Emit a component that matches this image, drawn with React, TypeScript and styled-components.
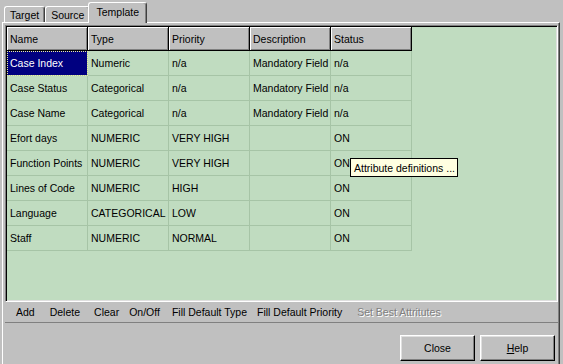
import React from 'react';
import styled, { createGlobalStyle, css } from 'styled-components';

const GlobalStyle = createGlobalStyle`
  html, body {
    margin: 0;
    padding: 0;
    background: #c0c0c0;
    overflow: hidden;
  }
`;

const FACE = '#c0c0c0';
const GRID_BG = '#c0dcc0';
const GRID_LINE = '#a6c4a6';

const Window = styled.div`
  width: 563px;
  height: 364px;
  background: ${FACE};
  display: flex;
  flex-direction: column;
  font-family: 'Liberation Sans', Arial, sans-serif;
  font-size: 10.5px;
  color: #000;
  overflow: hidden;
`;

const TabStrip = styled.div`
  display: flex;
  align-items: flex-end;
  height: 22px;
  padding-left: 4px;
  flex-shrink: 0;
`;

const Tab = styled.div<{ $active?: boolean }>`
  box-sizing: border-box;
  height: 16px;
  padding: 0 5px;
  display: flex;
  align-items: center;
  background: ${FACE};
  border-top: 1px solid #fff;
  border-left: 1px solid #fff;
  border-right: 1px solid #404040;
  border-radius: 3px 3px 0 0;
  box-shadow: inset -1px 0 #808080;
  white-space: nowrap;

  ${({ $active }) =>
    $active &&
    css`
      height: 21px;
      margin: 0 -2px -1px;
      padding: 0 7px 2px;
      position: relative;
      z-index: 1;
    `}
`;

const Panel = styled.div`
  flex: 1;
  width: 558px;
  box-sizing: border-box;
  margin-left: 2px;
  border-top: 1px solid #fff;
  border-left: 1px solid #fff;
  border-right: 1px solid #404040;
  box-shadow: inset -1px 0 #808080;
  padding: 2px 1px 0 2px;
  display: flex;
  flex-direction: column;
`;

const GridFrame = styled.div`
  position: relative;
  box-sizing: border-box;
  height: 277px;
  background: ${GRID_BG};
  border-top: 1px solid #808080;
  border-left: 1px solid #808080;
  border-right: 1px solid #fff;
  border-bottom: 1px solid #fff;
  box-shadow: inset 1px 1px #000, inset -1px -1px #dfdfdf;
  padding: 1px 0 0 1px;
`;

const Table = styled.div`
  display: grid;
  grid-template-columns: repeat(5, 81px);
  grid-auto-rows: 25px;
  grid-template-rows: 24px;
`;

const HeaderCell = styled.div`
  box-sizing: border-box;
  background: ${FACE};
  border-right: 1px solid #000;
  border-bottom: 1px solid #000;
  box-shadow: inset 1px 1px #fff, inset -1px -1px #808080;
  padding-left: 3px;
  display: flex;
  align-items: center;
  white-space: nowrap;
`;

const Cell = styled.div<{ $selected?: boolean }>`
  box-sizing: border-box;
  border-right: 1px solid ${GRID_LINE};
  border-bottom: 1px solid ${GRID_LINE};
  padding-left: 3px;
  display: flex;
  align-items: center;
  white-space: nowrap;
  overflow: hidden;

  ${({ $selected }) =>
    $selected &&
    css`
      background: #000080;
      color: #fff;
      outline: 1px dotted #f0f0a0;
      outline-offset: -1px;
    `}
`;

const Tooltip = styled.div`
  position: absolute;
  left: 344px;
  top: 132px;
  box-sizing: border-box;
  height: 19px;
  padding: 0 2px 0 3px;
  background: #ffffe1;
  border: 1px solid #000;
  display: flex;
  align-items: center;
  white-space: nowrap;
`;

const Toolbar = styled.div`
  height: 21px;
  box-sizing: border-box;
  width: 553px;
  border-bottom: 1px solid #808080;
  display: flex;
  align-items: center;
  padding-left: 6px;
`;

const ToolButton = styled.button<{ $gapBefore?: number }>`
  background: transparent;
  border: none;
  padding: 0 5px;
  margin-left: ${({ $gapBefore }) => $gapBefore ?? 0}px;
  font: inherit;
  color: #000;
  white-space: nowrap;

  &:disabled {
    color: #808080;
    text-shadow: 1px 1px #fff;
  }
`;

const Footer = styled.div`
  display: flex;
  justify-content: flex-end;
  gap: 5px;
  padding: 12px 3px 0 0;
`;

const PushButton = styled.button`
  box-sizing: border-box;
  width: 75px;
  height: 26px;
  background: ${FACE};
  border-top: 1px solid #fff;
  border-left: 1px solid #fff;
  border-right: 1px solid #000;
  border-bottom: 1px solid #000;
  box-shadow: inset -1px -1px #808080, inset 1px 1px #dfdfdf;
  font: inherit;
  color: #000;
  padding: 0;

  u {
    text-decoration: underline;
  }
`;

const columns = ['Name', 'Type', 'Priority', 'Description', 'Status'];

const rows: string[][] = [
  ['Case Index', 'Numeric', 'n/a', 'Mandatory Field', 'n/a'],
  ['Case Status', 'Categorical', 'n/a', 'Mandatory Field', 'n/a'],
  ['Case Name', 'Categorical', 'n/a', 'Mandatory Field', 'n/a'],
  ['Efort days', 'NUMERIC', 'VERY HIGH', '', 'ON'],
  ['Function Points', 'NUMERIC', 'VERY HIGH', '', 'ON'],
  ['Lines of Code', 'NUMERIC', 'HIGH', '', 'ON'],
  ['Language', 'CATEGORICAL', 'LOW', '', 'ON'],
  ['Staff', 'NUMERIC', 'NORMAL', '', 'ON'],
];

const tools = [
  { label: 'Add', gap: 0 },
  { label: 'Delete', gap: 5 },
  { label: 'Clear', gap: 4 },
  { label: 'On/Off', gap: 0 },
  { label: 'Fill Default Type', gap: 2 },
  { label: 'Fill Default Priority', gap: 0 },
  { label: 'Set Best Attritutes', gap: 5, disabled: true },
];

export default function App(): React.ReactElement {
  return (
    <Window>
      <GlobalStyle />
      <TabStrip>
        <Tab>Target</Tab>
        <Tab>Source</Tab>
        <Tab $active>Template</Tab>
      </TabStrip>
      <Panel>
        <GridFrame>
          <Table>
            {columns.map((c) => (
              <HeaderCell key={c}>{c}</HeaderCell>
            ))}
            {rows.map((row, r) =>
              row.map((value, c) => (
                <Cell key={`${r}-${c}`} $selected={r === 0 && c === 0}>
                  {value}
                </Cell>
              ))
            )}
          </Table>
          <Tooltip>Attribute definitions ...</Tooltip>
        </GridFrame>
        <Toolbar>
          {tools.map((t) => (
            <ToolButton key={t.label} $gapBefore={t.gap} disabled={t.disabled}>
              {t.label}
            </ToolButton>
          ))}
        </Toolbar>
        <Footer>
          <PushButton>Close</PushButton>
          <PushButton>
            <u>H</u>elp
          </PushButton>
        </Footer>
      </Panel>
    </Window>
  );
}
